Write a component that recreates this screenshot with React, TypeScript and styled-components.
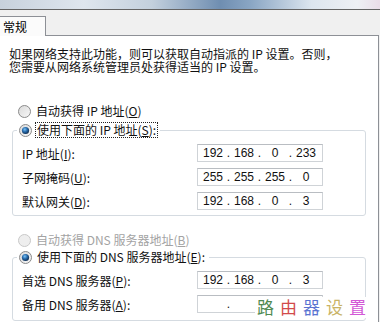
import React from "react";
import styled, { createGlobalStyle } from "styled-components";

const GlobalStyle = createGlobalStyle`
  html, body {
    margin: 0;
    padding: 0;
    background: #f0f0f0;
  }
  body {
    font-family: "Noto Sans CJK SC", "Liberation Sans", sans-serif;
    font-size: 12px;
    color: #111;
  }
`;

interface RadioProps {
  checked?: boolean;
  disabled?: boolean;
}

const RadioIcon = ({ checked, disabled }: RadioProps) => (
  <svg width="13" height="13" viewBox="0 0 13 13">
    <defs>
      <linearGradient id="rbg" x1="0" y1="0" x2="1" y2="1">
        <stop offset="0" stopColor="#d9d9d9" />
        <stop offset="1" stopColor="#f8f8f8" />
      </linearGradient>
      <radialGradient id="rdot" cx="0.4" cy="0.35" r="0.7">
        <stop offset="0" stopColor="#7cc3f5" />
        <stop offset="0.45" stopColor="#2a6fb0" />
        <stop offset="1" stopColor="#0b2444" />
      </radialGradient>
    </defs>
    <circle
      cx="6.5"
      cy="6.5"
      r="6"
      fill={disabled ? "#eeeeee" : "url(#rbg)"}
      stroke={disabled ? "#c8c8c8" : "#8a8a8a"}
    />
    {checked && <circle cx="6.5" cy="6.5" r="3.6" fill="url(#rdot)" />}
  </svg>
);

interface RadioOptionProps extends RadioProps {
  children: React.ReactNode;
  focused?: boolean;
}

const RadioOption = ({ checked, disabled, focused, children }: RadioOptionProps) => (
  <RadioLine $disabled={disabled}>
    <RadioIcon checked={checked} disabled={disabled} />
    <RadioText $focused={focused}>{children}</RadioText>
  </RadioLine>
);

const IpField = ({ values }: { values: string[] }) => (
  <IpBox>
    {values.map((v, i) => (
      <React.Fragment key={`oct-${i}`}>
        {i > 0 && <IpDot>.</IpDot>}
        <Octet>{v}</Octet>
      </React.Fragment>
    ))}
  </IpBox>
);

const Key = ({ k }: { k: string }) => (
  <>
    (<u>{k}</u>)
  </>
);

const ipRows = [
  { label: "IP 地址", key: "I", values: ["192", "168", "0", "233"] },
  { label: "子网掩码", key: "U", values: ["255", "255", "255", "0"] },
  { label: "默认网关", key: "D", values: ["192", "168", "0", "3"] },
];

const dnsRows = [
  { label: "首选 DNS 服务器", key: "P", values: ["192", "168", "0", "3"] },
  { label: "备用 DNS 服务器", key: "A", values: ["", "", "", ""] },
];

const markChars = [
  { ch: "路", color: "#4f8a52" },
  { ch: "由", color: "#d24a4a" },
  { ch: "器", color: "#5a74d2" },
  { ch: "设", color: "#c9b365" },
  { ch: "置", color: "#d358d6" },
];

export default function App() {
  return (
    <Window>
      <GlobalStyle />
      <TitleStrip />
      <TabBar>
        <Tab>常规</Tab>
        <TabFill />
      </TabBar>
      <Panel>
        <Intro>
          如果网络支持此功能，则可以获取自动指派的 IP 设置。否则，
          <br />
          您需要从网络系统管理员处获得适当的 IP 设置。
        </Intro>

        <AutoRow>
          <RadioOption>
            自动获得 IP 地址<Key k="O" />
          </RadioOption>
        </AutoRow>

        <Group>
          <Legend>
            <RadioOption checked focused>
              使用下面的 IP 地址<Key k="S" />:
            </RadioOption>
          </Legend>
          {ipRows.map((r) => (
            <FieldRow key={r.key}>
              <FieldLabel>
                {r.label}
                <Key k={r.key} />:
              </FieldLabel>
              <IpField values={r.values} />
            </FieldRow>
          ))}
        </Group>

        <AutoRow $dns>
          <RadioOption disabled>
            自动获得 DNS 服务器地址<Key k="B" />
          </RadioOption>
        </AutoRow>

        <Group $dns>
          <Legend>
            <RadioOption checked>
              使用下面的 DNS 服务器地址<Key k="E" />:
            </RadioOption>
          </Legend>
          {dnsRows.map((r) => (
            <FieldRow key={r.key}>
              <FieldLabel>
                {r.label}
                <Key k={r.key} />:
              </FieldLabel>
              <IpField values={r.values} />
            </FieldRow>
          ))}
        </Group>

        <Watermark>
          {markChars.map((m) => (
            <MarkChar key={m.ch} $color={m.color}>
              {m.ch}
            </MarkChar>
          ))}
        </Watermark>
      </Panel>
    </Window>
  );
}

const Window = styled.div`
  width: 380px;
  height: 322px;
  overflow: hidden;
  background: #f0f0f0;
  display: flex;
  flex-direction: column;
`;

const TitleStrip = styled.div`
  height: 9px;
  flex-shrink: 0;
  border-bottom: 1px solid #646464;
  background: linear-gradient(
    90deg,
    #c7d1dc 0%,
    #dfe6ee 22%,
    #c3d0dd 40%,
    #6f8eb1 58%,
    #8aa6c4 66%,
    #dde6ef 82%,
    #eef0f4 94%,
    #eadde8 100%
  );
`;

const TabBar = styled.div`
  height: 26px;
  flex-shrink: 0;
  display: flex;
  align-items: flex-end;
  width: 379px;
`;

const Tab = styled.div`
  width: 46px;
  height: 20px;
  box-sizing: border-box;
  background: #fbfbfb;
  border-top: 1px solid #8d9096;
  border-right: 1px solid #8d9096;
  padding: 2px 0 0 3px;
  font-size: 12px;
  line-height: 15px;
  color: #000;
`;

const TabFill = styled.div`
  flex: 1;
  align-self: stretch;
  border-bottom: 1px solid #8d9096;
`;

const Panel = styled.div`
  position: relative;
  flex: 1;
  width: 379px;
  box-sizing: border-box;
  background: #fff;
  border-right: 1px solid #8d9096;
  display: flex;
  flex-direction: column;
`;

const Intro = styled.div`
  margin: 11px 0 0 9px;
  font-size: 12px;
  line-height: 13px;
  white-space: nowrap;
  color: #111;
`;

const AutoRow = styled.div<{ $dns?: boolean }>`
  margin: ${(p) => (p.$dns ? "16px" : "30px")} 0 ${(p) => (p.$dns ? "1px" : "3px")} 18px;
`;

const RadioLine = styled.div<{ $disabled?: boolean }>`
  display: flex;
  align-items: center;
  gap: 3px;
  height: 16px;
  font-size: 12px;
  line-height: 14px;
  white-space: nowrap;
  color: ${(p) => (p.$disabled ? "#a3a3a3" : "#111")};
  svg {
    flex-shrink: 0;
  }
`;

const RadioText = styled.span<{ $focused?: boolean }>`
  padding: 0 1px;
  border: 1px dotted ${(p) => (p.$focused ? "#222" : "transparent")};
`;

const Group = styled.fieldset<{ $dns?: boolean }>`
  margin: 0 12px 0 12px;
  padding: 6px 0 ${(p) => (p.$dns ? "7px" : "5px")} 0;
  border: 1px solid #d5dbe1;
  border-radius: 3px;
  display: flex;
  flex-direction: column;
  gap: 6px;
  min-width: 0;
`;

const Legend = styled.legend`
  margin-left: 4px;
  padding: 0 2px;
`;

const FieldRow = styled.div`
  display: flex;
  align-items: center;
  padding-left: 9px;
  height: 18px;
`;

const FieldLabel = styled.div`
  width: 175px;
  flex-shrink: 0;
  font-size: 12px;
  white-space: nowrap;
  color: #111;
`;

const IpBox = styled.div`
  width: 126px;
  height: 18px;
  box-sizing: border-box;
  border: 1px solid #cfd3d7;
  border-top-color: #b9bdc2;
  display: flex;
  align-items: center;
  padding-left: 3px;
  font-family: "Liberation Sans", "DejaVu Sans", sans-serif;
  font-size: 12px;
  color: #111;
`;

const Octet = styled.span`
  width: 24px;
  text-align: center;
`;

const IpDot = styled.span`
  width: 7px;
  text-align: center;
`;

const Watermark = styled.div`
  position: absolute;
  left: 255px;
  top: 261px;
  padding: 0 2px 2px 2px;
  background: #fff;
  display: flex;
  gap: 6px;
  font-family: "Noto Sans CJK SC", sans-serif;
  font-size: 17px;
  line-height: 19px;
`;

const MarkChar = styled.span<{ $color: string }>`
  color: ${(p) => p.$color};
`;
